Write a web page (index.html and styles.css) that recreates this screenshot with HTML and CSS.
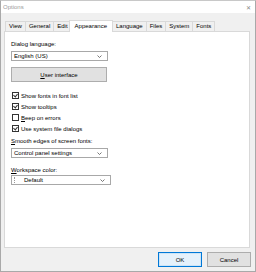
FILE: index.html
```html
<!DOCTYPE html>
<html lang="en">
<head>
    <meta charset="UTF-8">
    <title>Options</title>
    <link rel="stylesheet" href="styles.css">
</head>
<body>
    <div class="window">
        <div class="titlebar">
            <span class="title">Options</span>
            <span class="close">&#x2715;</span>
        </div>
        <div class="frame">
            <div class="tabs">
                <div class="tab">View</div>
                <div class="tab">General</div>
                <div class="tab">Edit</div>
                <div class="tab active">Appearance</div>
                <div class="tab">Language</div>
                <div class="tab">Files</div>
                <div class="tab">System</div>
                <div class="tab">Fonts</div>
            </div>
            <div class="panel">
                <div class="label">Dialog language:</div>
                <div class="combo">
                    <span>English (US)</span>
                    <svg class="arrow" width="5" height="3" viewBox="0 0 5 3"><polyline points="0.5,0.5 2.5,2.5 4.5,0.5" fill="none" stroke="#555" stroke-width="0.8"/></svg>
                </div>
                <button class="wide-button"><u>U</u>ser interface</button>

                <div class="checks">
                    <label class="check"><span class="box on"></span>Show fonts in font list</label>
                    <label class="check"><span class="box on"></span>Show tooltips</label>
                    <label class="check"><span class="box"></span><u>B</u>eep on errors</label>
                    <label class="check"><span class="box on"></span>Use system file dialogs</label>
                </div>

                <div class="label second"><u>S</u>mooth edges of screen fonts:</div>
                <div class="combo">
                    <span>Control panel settings</span>
                    <svg class="arrow" width="5" height="3" viewBox="0 0 5 3"><polyline points="0.5,0.5 2.5,2.5 4.5,0.5" fill="none" stroke="#555" stroke-width="0.8"/></svg>
                </div>

                <div class="label third"><u>W</u>orkspace color:</div>
                <div class="combo color">
                    <span class="swatch">Default</span>
                    <svg class="arrow" width="5" height="3" viewBox="0 0 5 3"><polyline points="0.5,0.5 2.5,2.5 4.5,0.5" fill="none" stroke="#555" stroke-width="0.8"/></svg>
                </div>
            </div>
            <div class="footer">
                <button class="btn default">OK</button>
                <button class="btn">Cancel</button>
            </div>
        </div>
    </div>
</body>
</html>
```

FILE: styles.css
```css
body {
    margin: 0;
    font-family: "Liberation Sans", Arial, sans-serif;
    font-size: 6px;
    color: #000;
    background: #fff;
}

.window {
    width: 256px;
    height: 272px;
    box-sizing: border-box;
    border: 1px solid #a9a9a9;
    border-top-color: #c8c8c8;
    background: #f0f0f0;
    display: flex;
    flex-direction: column;
}

.titlebar {
    height: 12px;
    background: #fff;
    display: flex;
    align-items: center;
    justify-content: space-between;
    padding: 0 4px 0 2px;
}

.title {
    color: #9a9a9a;
    font-size: 6px;
}

.close {
    color: #888;
    font-size: 6px;
}

.frame {
    flex: 1;
    display: flex;
    flex-direction: column;
    padding: 6px 5px 0 3px;
}

.tabs {
    display: flex;
    align-items: flex-end;
    height: 12px;
    padding-left: 1px;
}

.tab {
    height: 10px;
    line-height: 9px;
    padding: 0 3px;
    box-sizing: border-box;
    border: 1px solid #d9d9d9;
    border-bottom: none;
    margin-right: -1px;
    background: #f0f0f0;
}

.tab.active {
    height: 12px;
    line-height: 11px;
    background: #fff;
    margin: 0 -1px 0 -2px;
    padding: 0 5px;
    position: relative;
    z-index: 1;
    top: 1px;
}

.panel {
    height: 217px;
    box-sizing: border-box;
    background: #fff;
    border: 1px solid #d9d9d9;
    padding: 9px 0 0 6px;
}

.label {
    height: 7px;
    line-height: 7px;
    margin-bottom: 3px;
}

.label.second {
    margin-top: 4px;
}

.label.third {
    margin-top: 9px;
    margin-bottom: 1px;
}

.combo {
    width: 97px;
    height: 10px;
    box-sizing: border-box;
    border: 1px solid #a8a8a8;
    display: flex;
    align-items: center;
    justify-content: space-between;
    padding: 0 5px 0 2px;
    background: #fff;
}

.combo.color {
    width: 100px;
    padding-left: 2px;
}

.swatch {
    padding-left: 9px;
    border-left: 1px dotted #999;
    height: 6px;
    line-height: 6px;
}

.wide-button {
    display: block;
    width: 96px;
    height: 15px;
    margin-top: 6px;
    border: 1px solid #adadad;
    background: #e1e1e1;
    font: inherit;
    padding: 0;
}

.checks {
    margin-top: 8px;
}

.check {
    display: flex;
    align-items: center;
    height: 11px;
    padding-left: 1px;
}

.box {
    width: 7px;
    height: 7px;
    box-sizing: border-box;
    border: 1px solid #333;
    margin-right: 2px;
    position: relative;
}

.box.on::after {
    content: "";
    position: absolute;
    left: 1px;
    top: 0;
    width: 2px;
    height: 3px;
    border-right: 1px solid #333;
    border-bottom: 1px solid #333;
    transform: rotate(40deg);
}

.footer {
    display: flex;
    justify-content: flex-end;
    gap: 5px;
    padding-top: 4px;
    margin-right: -1px;
}

.btn {
    width: 44px;
    height: 15px;
    border: 1px solid #adadad;
    background: #e1e1e1;
    font: inherit;
    padding: 0;
}

.btn.default {
    border-color: #0078d7;
    background: #e5f1fb;
    box-shadow: inset 0 0 0 1px #cce4f7;
}
```
